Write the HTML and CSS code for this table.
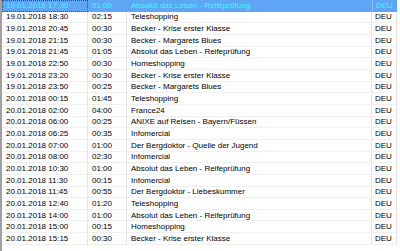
FILE: index.html
```html
<!DOCTYPE html>
<html>
<head>
<meta charset="utf-8">
<link rel="stylesheet" href="styles.css">
</head>
<body>
<div class="view">
  <div class="list">
    <div class="row sel"><div class="c date focus">19.01.2018 17:30</div><div class="c dur">01:00</div><div class="c title">Absolut das Leben - Reifeprüfung</div><div class="c lang">DEU</div></div>
    <div class="row"><div class="c date">19.01.2018 18:30</div><div class="c dur">02:15</div><div class="c title">Teleshopping</div><div class="c lang">DEU</div></div>
    <div class="row"><div class="c date">19.01.2018 20:45</div><div class="c dur">00:30</div><div class="c title">Becker - Krise erster Klasse</div><div class="c lang">DEU</div></div>
    <div class="row"><div class="c date">19.01.2018 21:15</div><div class="c dur">00:30</div><div class="c title">Becker - Margarets Blues</div><div class="c lang">DEU</div></div>
    <div class="row"><div class="c date">19.01.2018 21:45</div><div class="c dur">01:05</div><div class="c title">Absolut das Leben - Reifeprüfung</div><div class="c lang">DEU</div></div>
    <div class="row"><div class="c date">19.01.2018 22:50</div><div class="c dur">00:30</div><div class="c title">Homeshopping</div><div class="c lang">DEU</div></div>
    <div class="row"><div class="c date">19.01.2018 23:20</div><div class="c dur">00:30</div><div class="c title">Becker - Krise erster Klasse</div><div class="c lang">DEU</div></div>
    <div class="row"><div class="c date">19.01.2018 23:50</div><div class="c dur">00:25</div><div class="c title">Becker - Margarets Blues</div><div class="c lang">DEU</div></div>
    <div class="row"><div class="c date">20.01.2018 00:15</div><div class="c dur">01:45</div><div class="c title">Teleshopping</div><div class="c lang">DEU</div></div>
    <div class="row"><div class="c date">20.01.2018 02:00</div><div class="c dur">04:00</div><div class="c title">France24</div><div class="c lang">DEU</div></div>
    <div class="row"><div class="c date">20.01.2018 06:00</div><div class="c dur">00:25</div><div class="c title">ANIXE auf Reisen - Bayern/Füssen</div><div class="c lang">DEU</div></div>
    <div class="row"><div class="c date">20.01.2018 06:25</div><div class="c dur">00:35</div><div class="c title">Infomercial</div><div class="c lang">DEU</div></div>
    <div class="row"><div class="c date">20.01.2018 07:00</div><div class="c dur">01:00</div><div class="c title">Der Bergdoktor - Quelle der Jugend</div><div class="c lang">DEU</div></div>
    <div class="row"><div class="c date">20.01.2018 08:00</div><div class="c dur">02:30</div><div class="c title">Infomercial</div><div class="c lang">DEU</div></div>
    <div class="row"><div class="c date">20.01.2018 10:30</div><div class="c dur">01:00</div><div class="c title">Absolut das Leben - Reifeprüfung</div><div class="c lang">DEU</div></div>
    <div class="row"><div class="c date">20.01.2018 11:30</div><div class="c dur">00:15</div><div class="c title">Infomercial</div><div class="c lang">DEU</div></div>
    <div class="row"><div class="c date">20.01.2018 11:45</div><div class="c dur">00:55</div><div class="c title">Der Bergdoktor - Liebeskummer</div><div class="c lang">DEU</div></div>
    <div class="row"><div class="c date">20.01.2018 12:40</div><div class="c dur">01:20</div><div class="c title">Teleshopping</div><div class="c lang">DEU</div></div>
    <div class="row"><div class="c date">20.01.2018 14:00</div><div class="c dur">01:00</div><div class="c title">Absolut das Leben - Reifeprüfung</div><div class="c lang">DEU</div></div>
    <div class="row"><div class="c date">20.01.2018 15:00</div><div class="c dur">00:15</div><div class="c title">Homeshopping</div><div class="c lang">DEU</div></div>
    <div class="row"><div class="c date">20.01.2018 15:15</div><div class="c dur">00:30</div><div class="c title">Becker - Krise erster Klasse</div><div class="c lang">DEU</div></div>
  </div>
</div>
</body>
</html>
```

FILE: styles.css
```css
* { box-sizing: border-box; }
html, body {
  margin: 0;
  padding: 0;
  background: #ffffff;
}
body {
  width: 400px;
  height: 251px;
  overflow: hidden;
  font-family: "Liberation Sans", Arial, sans-serif;
  font-size: 8px;
  color: #000000;
}
.view {
  height: 251px;
  border-left: 2px solid #a0a0a0;
  background: #ffffff;
}
.list {
  display: flex;
  flex-direction: column;
  width: 395px;
}
.row {
  display: grid;
  grid-template-columns: 86px 39px 245px 25px;
  height: 11.667px;
}
.c {
  display: flex;
  align-items: center;
  padding-left: 4px;
  white-space: nowrap;
  overflow: hidden;
  border-right: 1px solid #e4e4e4;
  border-bottom: 1px solid #efefef;
}
.lang { padding-left: 3px; }
.row.sel .c {
  background: #5ea6f3;
  color: #3ff6ff;
  border-right-color: #5ea6f3;
  border-bottom-color: #5ea6f3;
}
.row.sel .c.lang {
  border-left: 1px solid #8cc0f6;
}
.row.sel .c.focus {
  outline: 1px dotted #2c4f86;
  outline-offset: -1px;
}
```
